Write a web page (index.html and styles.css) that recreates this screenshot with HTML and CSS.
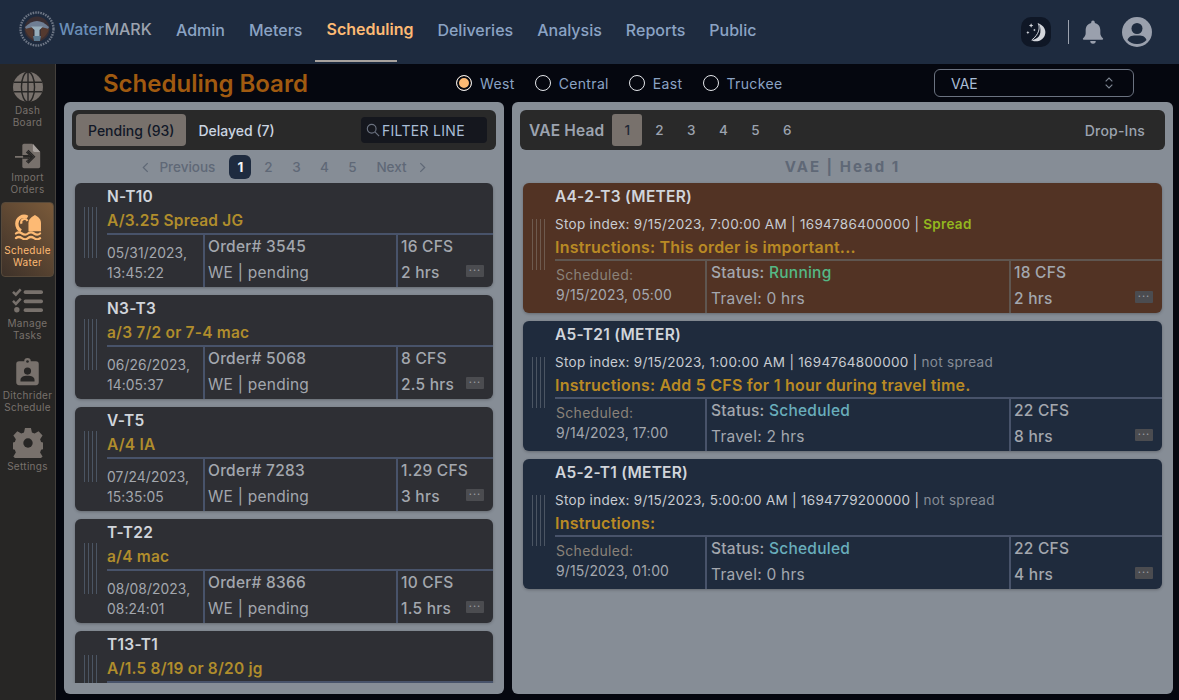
FILE: index.html
```html
<!DOCTYPE html>
<html lang="en">
<head>
<meta charset="utf-8">
<title>WaterMARK Scheduling Board</title>
<link rel="stylesheet" href="styles.css">
</head>
<body>
<header class="topbar">
  <div class="brand">
    <svg class="logo" viewBox="0 0 36 36" aria-hidden="true">
      <circle cx="18" cy="18" r="16.5" fill="none" stroke="#6d7685" stroke-width="2.4" stroke-dasharray="1.6 1"/>
      <circle cx="18" cy="18" r="12.5" fill="#3a2f33"/>
      <path d="M6 16 Q18 4 30 16 L29 18 H7Z" fill="#6f7e93"/>
      <path d="M6 18 L14 16 L14 28 Q8 25 6 18Z M30 18 L22 16 L22 28 Q28 25 30 18Z" fill="#54392f"/>
      <path d="M12 15.500 H24 L20.500 19 V25 H15.500 V19Z" fill="#97adba"/>
      <path d="M14 25 H22 L21 30 H15Z" fill="#5c7a90"/>
    </svg>
    <span class="brand-name"><span class="brand-water">Water</span><span class="brand-mark">MARK</span></span>
  </div>
  <nav class="mainnav">
    <a class="navlink">Admin</a>
    <a class="navlink">Meters</a>
    <a class="navlink navlink-active">Scheduling</a>
    <a class="navlink">Deliveries</a>
    <a class="navlink">Analysis</a>
    <a class="navlink">Reports</a>
    <a class="navlink">Public</a>
  </nav>
  <div class="top-actions">
    <span class="theme-btn">
      <svg viewBox="0 0 24 24" width="26" height="26" aria-hidden="true">
        <path d="M14 4 C19.500 6 22 11 20 15.500 C18 20 12.500 22 8 19.500 C12 19 15.500 16.500 16 12.500 C16.400 9 15.800 6 14 4Z" fill="#d3d6dc"/>
        <path d="M14 4 C16 8 15 14 8 19.500" fill="none" stroke="#d3d6dc" stroke-width=".9"/>
        <path d="M7.500 4l.6 1.400 1.400.6-1.400.6-.6 1.400-.6-1.400L5.500 6l1.400-.6zM4.500 11l.5 1 1 .5-1 .5-.5 1-.5-1-1-.5 1-.5zM10.500 9l.4.8.8.4-.8.4-.4.8-.4-.8-.8-.4.8-.4z" fill="#d3d6dc"/>
      </svg>
    </span>
    <span class="top-divider"></span>
    <svg class="bell" viewBox="0 0 24 28" width="22" height="26" aria-hidden="true">
      <path d="M12 1.500a2 2 0 0 1 2 2v.8c3.800.9 6 4 6 8v3c0 2.500 1.200 4 2.800 5.600.6.700.2 1.600-.7 1.600H1.900c-.9 0-1.300-.9-.7-1.600C2.800 19.300 4 17.800 4 15.300v-3c0-4 2.200-7.100 6-8v-.8a2 2 0 0 1 2-2z M9 23.800h6a3 3 0 0 1-6 0z" fill="#9aa0ad"/>
    </svg>
    <svg class="avatar" viewBox="0 0 30 30" width="30" height="30" aria-hidden="true">
      <circle cx="15" cy="15" r="15" fill="#9aa0ad"/>
      <circle cx="15" cy="11.500" r="5.500" fill="#1e2b3f"/>
      <path d="M5.500 23 C7 18.500 11 18.500 15 18.500 S23 18.500 24.500 23 A12.500 12.500 0 0 1 15 27 A12.500 12.500 0 0 1 5.500 23Z" fill="#1e2b3f"/>
    </svg>
  </div>
</header>
<div class="shell">
  <aside class="sidenav">
    <a class="sideitem">
      <svg viewBox="0 0 32 32" width="30" height="30" aria-hidden="true">
        <circle cx="16" cy="16" r="16" fill="#78716c"/>
        <g fill="none" stroke="#272625" stroke-width="1.500">
          <ellipse cx="16" cy="16" rx="7" ry="16"/><path d="M16 0V32M1 11H31M1 21H31"/>
        </g>
      </svg>
      <span>Dash<br>Board</span>
    </a>
    <a class="sideitem">
      <svg viewBox="0 0 32 32" width="26" height="26" aria-hidden="true">
        <path d="M9 3a2 2 0 0 1 2-2h10l10 10v18a2 2 0 0 1-2 2H11a2 2 0 0 1-2-2V3z" fill="#78716c"/>
        <path d="M22 1v8a2 2 0 0 0 2 2h7z" fill="#a8a29e"/>
        <path d="M9 17H21M15 10l7 7-7 7" fill="none" stroke="#272625" stroke-width="4.500"/>
        <path d="M0 17H21M15.500 11l6 6-6 6" fill="none" stroke="#78716c" stroke-width="2.200"/>
        <path d="M10 17H21M15.500 11l6 6-6 6" fill="none" stroke="#272625" stroke-width="2.200"/>
      </svg>
      <span>Import<br>Orders</span>
    </a>
    <a class="sideitem sideitem-active">
      <svg viewBox="0 0 32 28" width="32" height="26" aria-hidden="true">
        <path d="M15.500 3.500A7.800 7.800 0 0 0 4 10.500C4 14 5.500 16.500 8.500 18" fill="none" stroke="#fdba74" stroke-width="3.600"/>
        <path d="M15.500 7.500A3.500 3.500 0 0 0 9 10.500" fill="none" stroke="#fdba74" stroke-width="2.400"/>
        <path d="M23.500 1c3.500 1.700 6.500 4.500 6.500 9v8.500H16.500V10c0-4.500 3.500-7.300 7-9z" fill="#fdba74"/>
        <g fill="none" stroke="#fdba74" stroke-width="2.400" stroke-linecap="round">
          <path d="M3 21q3-2.500 6.500 0t6.500 0 6.500 0 6.500 0"/><path d="M3 26q3-2.500 6.500 0t6.500 0 6.500 0 6.500 0"/>
        </g>
      </svg>
      <span>Schedule<br>Water</span>
    </a>
    <a class="sideitem sideitem-tasks">
      <svg viewBox="0 0 32 26" width="31" height="26" aria-hidden="true">
        <g fill="none" stroke="#78716c" stroke-width="2.600">
          <path d="M1 4.500l3 3 5-5.500M1 14l3 3 5-5.500"/>
        </g>
        <circle cx="5" cy="23" r="2.800" fill="#78716c"/>
        <rect x="12" y="3" width="20" height="3.800" rx="1.800" fill="#78716c"/>
        <rect x="12" y="12.500" width="20" height="3.800" rx="1.800" fill="#78716c"/>
        <rect x="12" y="21.500" width="20" height="3.800" rx="1.800" fill="#78716c"/>
      </svg>
      <span>Manage<br>Tasks</span>
    </a>
    <a class="sideitem">
      <svg viewBox="0 0 24 32" width="23" height="30" aria-hidden="true">
        <path d="M3 4.500h5.500a3.500 3.500 0 0 1 7 0H21a3 3 0 0 1 3 3V27a3 3 0 0 1-3 3H3a3 3 0 0 1-3-3V7.500a3 3 0 0 1 3-3z" fill="#78716c"/>
        <circle cx="12" cy="4.800" r="1.400" fill="#272625"/>
        <circle cx="12" cy="15" r="3.800" fill="#272625"/>
        <path d="M4.500 26v-1.500c0-3 3-4.500 7.500-4.500s7.500 1.500 7.500 4.500V26z" fill="#272625"/>
      </svg>
      <span>Ditchrider<br>Schedule</span>
    </a>
    <a class="sideitem">
      <svg viewBox="0 0 32 32" width="30" height="30" aria-hidden="true">
        <path d="M13 1h6l1 4.500 2.700 1.100 4-2.400 4 4.300-2.500 3.800 1 2.700 3.800 1v5.900l-3.800 1-1 2.700 2.500 3.900-4 4.200-4-2.400-2.700 1.100-1 4.500h-6l-1-4.500-2.700-1.100-4 2.400-4-4.200 2.500-3.900-1-2.700-3.800-1v-5.900l3.800-1 1-2.700-2.500-3.800 4-4.300 4 2.400 2.700-1.100z" transform="translate(-1 -1) scale(1.060)" fill="#78716c"/>
        <circle cx="16" cy="16" r="5" fill="#272625"/>
      </svg>
      <span>Settings</span>
    </a>
  </aside>
  <main class="content">
    <div class="board-head">
      <h1 class="board-title">Scheduling Board</h1>
      <div class="regions">
        <label class="region"><span class="radio radio-on"></span>West</label>
        <label class="region"><span class="radio"></span>Central</label>
        <label class="region"><span class="radio"></span>East</label>
        <label class="region"><span class="radio"></span>Truckee</label>
      </div>
      <div class="select">VAE
        <svg viewBox="0 0 12 16" width="10" height="14" aria-hidden="true"><path d="M2 6l4-4 4 4M2 10l4 4 4-4" fill="none" stroke="#7f8794" stroke-width="1.300"/></svg>
      </div>
    </div>
    <div class="columns">
      <section class="panel panel-left">
        <div class="toolbar">
          <button class="tab tab-on">Pending (93)</button>
          <button class="tab">Delayed (7)</button>
          <div class="filter">
            <svg viewBox="0 0 16 16" width="14" height="14" aria-hidden="true"><circle cx="6.500" cy="6.500" r="5" fill="none" stroke="#6b7280" stroke-width="1.300"/><path d="M10.500 10.500l4.500 4.500" stroke="#6b7280" stroke-width="1.300"/></svg>
            <span>FILTER LINE</span>
          </div>
        </div>
        <div class="pager">
          <svg viewBox="0 0 8 12" width="7" height="11" aria-hidden="true"><path d="M6.500 1L1.500 6l5 5" fill="none" stroke="#5f6876" stroke-width="1.400"/></svg>
          <span class="pg-word pg-prev">Previous</span>
          <span class="pg pg-on">1</span><span class="pg">2</span><span class="pg">3</span><span class="pg">4</span><span class="pg">5</span>
          <span class="pg-word pg-next">Next</span>
          <svg viewBox="0 0 8 12" width="7" height="11" aria-hidden="true"><path d="M1.500 1l5 5-5 5" fill="none" stroke="#5f6876" stroke-width="1.400"/></svg>
        </div>
        <div class="order-list">
          <article class="order">
            <div class="grip"><i></i><i></i><i></i><i></i></div>
            <div class="order-main">
              <div class="order-title">N-T10</div>
              <div class="order-note">A/3.25 Spread JG</div>
              <div class="order-grid">
                <div class="cell cell-date">05/31/2023,<br>13:45:22</div>
                <div class="cell cell-mid"><b>Order# 3545</b><span>WE | pending</span></div>
                <div class="cell cell-end"><b>16 CFS</b><b>2 hrs</b><span class="more">···</span></div>
              </div>
            </div>
          </article>
          <article class="order">
            <div class="grip"><i></i><i></i><i></i><i></i></div>
            <div class="order-main">
              <div class="order-title">N3-T3</div>
              <div class="order-note">a/3 7/2 or 7-4 mac</div>
              <div class="order-grid">
                <div class="cell cell-date">06/26/2023,<br>14:05:37</div>
                <div class="cell cell-mid"><b>Order# 5068</b><span>WE | pending</span></div>
                <div class="cell cell-end"><b>8 CFS</b><b>2.5 hrs</b><span class="more">···</span></div>
              </div>
            </div>
          </article>
          <article class="order">
            <div class="grip"><i></i><i></i><i></i><i></i></div>
            <div class="order-main">
              <div class="order-title">V-T5</div>
              <div class="order-note">A/4 IA</div>
              <div class="order-grid">
                <div class="cell cell-date">07/24/2023,<br>15:35:05</div>
                <div class="cell cell-mid"><b>Order# 7283</b><span>WE | pending</span></div>
                <div class="cell cell-end"><b>1.29 CFS</b><b>3 hrs</b><span class="more">···</span></div>
              </div>
            </div>
          </article>
          <article class="order">
            <div class="grip"><i></i><i></i><i></i><i></i></div>
            <div class="order-main">
              <div class="order-title">T-T22</div>
              <div class="order-note">a/4 mac</div>
              <div class="order-grid">
                <div class="cell cell-date">08/08/2023,<br>08:24:01</div>
                <div class="cell cell-mid"><b>Order# 8366</b><span>WE | pending</span></div>
                <div class="cell cell-end"><b>10 CFS</b><b>1.5 hrs</b><span class="more">···</span></div>
              </div>
            </div>
          </article>
          <article class="order">
            <div class="grip"><i></i><i></i><i></i><i></i></div>
            <div class="order-main">
              <div class="order-title">T13-T1</div>
              <div class="order-note">A/1.5 8/19 or 8/20 jg</div>
              <div class="order-grid"></div>
            </div>
          </article>
        </div>
      </section>
      <section class="panel panel-right">
        <div class="toolbar toolbar-right">
          <span class="head-label">VAE Head</span>
          <button class="head-num head-num-on">1</button>
          <button class="head-num">2</button>
          <button class="head-num">3</button>
          <button class="head-num">4</button>
          <button class="head-num">5</button>
          <button class="head-num">6</button>
          <span class="dropins">Drop-Ins</span>
        </div>
        <div class="head-title">VAE | Head 1</div>
        <div class="sched-list">
          <article class="sched sched-running">
            <div class="grip"><i></i><i></i><i></i><i></i></div>
            <div class="sched-main">
              <div class="order-title">A4-2-T3 (METER)</div>
              <div class="stop">Stop index: 9/15/2023, 7:00:00 AM | 1694786400000 | <b class="spread">Spread</b></div>
              <div class="instr">Instructions: This order is important...</div>
              <div class="sched-grid">
                <div class="cell cell-date"><span class="sched-label">Scheduled:</span>9/15/2023, 05:00</div>
                <div class="cell cell-mid"><b>Status: <em class="st-run">Running</em></b><span>Travel: 0 hrs</span></div>
                <div class="cell cell-end"><b>18 CFS</b><b>2 hrs</b><span class="more">···</span></div>
              </div>
            </div>
          </article>
          <article class="sched">
            <div class="grip"><i></i><i></i><i></i><i></i></div>
            <div class="sched-main">
              <div class="order-title">A5-T21 (METER)</div>
              <div class="stop">Stop index: 9/15/2023, 1:00:00 AM | 1694764800000 | <span class="nospread">not spread</span></div>
              <div class="instr">Instructions: Add 5 CFS for 1 hour during travel time.</div>
              <div class="sched-grid">
                <div class="cell cell-date"><span class="sched-label">Scheduled:</span>9/14/2023, 17:00</div>
                <div class="cell cell-mid"><b>Status: <em class="st-sched">Scheduled</em></b><span>Travel: 2 hrs</span></div>
                <div class="cell cell-end"><b>22 CFS</b><b>8 hrs</b><span class="more">···</span></div>
              </div>
            </div>
          </article>
          <article class="sched">
            <div class="grip"><i></i><i></i><i></i><i></i></div>
            <div class="sched-main">
              <div class="order-title">A5-2-T1 (METER)</div>
              <div class="stop">Stop index: 9/15/2023, 5:00:00 AM | 1694779200000 | <span class="nospread">not spread</span></div>
              <div class="instr">Instructions:</div>
              <div class="sched-grid">
                <div class="cell cell-date"><span class="sched-label">Scheduled:</span>9/15/2023, 01:00</div>
                <div class="cell cell-mid"><b>Status: <em class="st-sched">Scheduled</em></b><span>Travel: 0 hrs</span></div>
                <div class="cell cell-end"><b>22 CFS</b><b>4 hrs</b><span class="more">···</span></div>
              </div>
            </div>
          </article>
        </div>
      </section>
    </div>
  </main>
</div>
</body>
</html>
```

FILE: styles.css
```css
* { box-sizing: border-box; }
html, body { height: 100%; }
body {
  margin: 0;
  height: 700px;
  overflow: hidden;
  background: #05070f;
  font-family: Inter, "Noto Sans", sans-serif;
  color: #d1d5db;
  display: flex;
  flex-direction: column;
}
.topbar {
  height: 64px;
  flex: none;
  background: #1e2b3f;
  display: flex;
  align-items: stretch;
  padding-left: 19px;
}
.brand { display: flex; align-items: center; gap: 4px; width: 145px; flex: none; padding-bottom: 6px; }
.logo { width: 36px; height: 36px; flex: none; }
.brand-name { font-size: 16px; font-weight: 500; }
.brand-water { color: #6b8fb8; }
.brand-mark { color: #9ca3af; }
.mainnav { display: flex; align-items: stretch; }
.navlink {
  position: relative;
  display: flex;
  align-items: center;
  padding: 0 12px 3px;
  font-size: 16px;
  font-weight: 500;
  color: #8ba3c4;
  height: 62px;
}
.navlink-active { color: #fdba74; font-weight: 600; padding-bottom: 5px; }
.navlink-active::after {
  content: "";
  position: absolute;
  left: 1px;
  bottom: 0;
  width: 82px;
  height: 2px;
  background: #a8a29e;
}
.top-actions { margin-left: auto; display: flex; align-items: center; padding-right: 27px; }
.theme-btn {
  width: 30px; height: 30px; border-radius: 10px; background: #0f1726;
  display: flex; align-items: center; justify-content: center;
}
.top-divider { width: 1px; height: 24px; background: #9ca3af; margin: 0 13px 0 17px; }
.bell { margin-right: 18px; }
.shell { flex: 1; display: flex; min-height: 0; }
.sidenav {
  width: 56px; flex: none; background: #272625; border-right: 1px solid #44403c;
  display: flex; flex-direction: column; align-items: center; padding-top: 8px;
}
.sideitem {
  width: 53px; display: flex; flex-direction: column; align-items: center;
  font-size: 10px; letter-spacing: .3px; line-height: 12px; color: #78716c; text-align: center;
  margin-bottom: 15px;
}
.sideitem svg { margin-bottom: 2px; display: block; flex: none; }
.sideitem-active {
  color: #fdba74; border-radius: 4px; padding: 11px 0 8px; margin-top: -8px; margin-bottom: 10px;
  background: linear-gradient(45deg, #3d3129, #7a5a3a);
  border: 1px solid #57493a;
}
.sideitem-active svg { margin-bottom: 4px; }
.sideitem-tasks { margin-bottom: 16px; }
.sideitem-tasks svg { margin-bottom: 4px; }
.content { flex: 1; min-width: 0; display: flex; flex-direction: column; padding: 0 6px 6px 8px; }
.board-head { height: 38px; flex: none; display: flex; align-items: center; padding-left: 39px; }
.board-title { margin: 0; width: 353px; font-size: 24px; font-weight: 600; color: #a05a10; flex: none; }
.regions { display: flex; gap: 20px; width: 478px; flex: none; }
.region { display: flex; align-items: center; gap: 8px; font-size: 14px; letter-spacing: .35px; color: #8ba3c4; }
.radio { width: 16px; height: 16px; border-radius: 50%; border: 1.500px solid #e5e7eb; background: #05070f; }
.radio-on { background: #fdba74; box-shadow: inset 0 0 0 2px #05070f; }
.select {
  width: 200px; height: 28px; border: 1px solid #6b7280; border-radius: 6px; color: #a9bdd6;
  display: flex; align-items: center; justify-content: space-between; padding: 0 19px 0 16px; font-size: 14px;
}
.columns { flex: 1; min-height: 0; display: flex; gap: 8px; }
.panel { background: #868d96; border-radius: 6px; padding: 8px; min-width: 0; display: flex; flex-direction: column; overflow: hidden; }
.panel-left { width: 440px; flex: none; padding-bottom: 11px; }
.panel-right { flex: 1; }
.toolbar { height: 40px; flex: none; background: #292929; border-radius: 6px; display: flex; align-items: center; padding: 0 9px 0 4px; }
.tab {
  height: 32px; border: 0; border-radius: 4px; background: transparent; color: #cbd5e1;
  font: 500 14px Inter, "Noto Sans", sans-serif; padding: 0 12px;
}
.tab-on { background: #78716c; color: #111827; }
.filter {
  margin-left: auto; width: 126px; height: 26px; border-radius: 4px; background: #15171e;
  display: flex; align-items: center; gap: 2px; padding-left: 5px; font-size: 14px; letter-spacing: .3px; color: #a9bdd6;
}
.pager { height: 34px; flex: none; display: flex; align-items: center; justify-content: center; font-size: 13.500px; font-weight: 500; color: #5f6876; }
.pg-prev { padding: 0 14px 0 10px; }
.pg-next { padding: 0 12px 0 7px; }
.pg { width: 22px; height: 24px; margin-right: 6px; display: flex; align-items: center; justify-content: center; border-radius: 6px; }
.pg-on { background: #1e2b3f; color: #f3f4f6; font-weight: 700; }
.order-list { flex: 1; min-height: 0; display: flex; flex-direction: column; gap: 8px; padding: 0 3px; overflow: hidden; margin-top: -1px; }
.order, .sched {
  flex: none; display: flex; border-radius: 6px; background: #2e2f34; overflow: hidden;
  box-shadow: 0 1px 3px rgba(0,0,0,.25);
}
.order { height: 104px; }
.grip { width: 32px; flex: none; display: flex; gap: 3px; padding: 24px 0 0 9px; height: 75px; }
.grip i { display: block; width: 1px; height: 51px; background: #4b5563; }
.sched .grip { padding-top: 36px; height: 87px; }
.order-main, .sched-main { flex: 1; min-width: 0; display: flex; flex-direction: column; }
.order-title { font-size: 15.500px; letter-spacing: .25px; font-weight: 600; color: #d1d5db; line-height: 18px; padding-top: 5px; height: 23px; }
.order-note { font-size: 15.500px; letter-spacing: .2px; font-weight: 600; color: #b08d2c; height: 27px; line-height: 22px; padding-top: 4px; }
.order-grid, .sched-grid { flex: 1; display: grid; border-top: 2px solid #48536a; }
.order-grid { grid-template-columns: 96px 193px 1fr; }
.cell { border-left: 2px solid #48536a; position: relative; padding: 0 0 0 3px; color: #a3a7ae; font-size: 15.500px; letter-spacing: .25px; display: flex; flex-direction: column; }
.cell b { font-weight: 500; line-height: 24px; }
.cell span { line-height: 28px; }
.cell b + b { line-height: 28px; }
.cell-date { border-left: 0; padding: 8px 0 0; font-size: 13.800px; letter-spacing: .1px; line-height: 20px; display: block; }
.more {
  position: absolute; right: 9px; bottom: 10px; width: 18px; height: 12px; line-height: 11px !important;
  background: #4b4c50; color: #9a9ca1; font-size: 11px; letter-spacing: 1px; text-align: center; border-radius: 1px;
}
.toolbar-right { padding: 0 20px 0 9px; }
.head-label { font-size: 15.500px; letter-spacing: .15px; font-weight: 600; color: #9ca3af; margin-right: 8px; }
.head-num { width: 30px; height: 32px; border: 0; border-radius: 3px; background: transparent; color: #9ca3af; font: 500 13.500px Inter, sans-serif; margin-right: 2px; padding: 0; }
.head-num-on { background: #78716c; color: #1f2937; }
.dropins { margin-left: auto; font-size: 14px; letter-spacing: .2px; font-weight: 500; color: #9ca3af; }
.head-title { height: 33px; flex: none; text-align: center; line-height: 33px; font-size: 15px; font-weight: 700; letter-spacing: 2px; color: #5f6876; }
.sched-list { display: flex; flex-direction: column; gap: 8px; padding: 0 3px; }
.sched { height: 130px; background: #1f2b3d; }
.sched-running { background: #523324; }
.stop { font-size: 13.500px; letter-spacing: .3px; color: #c8ccd2; line-height: 20px; padding-top: 8px; height: 28px; }
.spread { color: #93b71f; font-weight: 600; }
.nospread { color: #858b96; }
.instr { font-size: 16px; letter-spacing: .22px; font-weight: 600; color: #b98a24; height: 25px; line-height: 20px; padding-top: 3px; }
.sched-grid { grid-template-columns: 150px 304px 1fr; }
.sched-running .sched-grid, .sched-running .cell { border-color: #5f5650; }
.sched-running .grip i { background: #6e5a4e; }
.sched-label { display: block; color: #8a8279; line-height: 20px !important; letter-spacing: .3px; }
.sched .cell-date { color: #a3a7ae; padding: 4px 0 0 1px; font-size: 14px; }
.sched .cell-mid { padding-left: 4px; }
.st-run { color: #55b884; font-style: normal; }
.st-sched { color: #69aebc; font-style: normal; }
```
